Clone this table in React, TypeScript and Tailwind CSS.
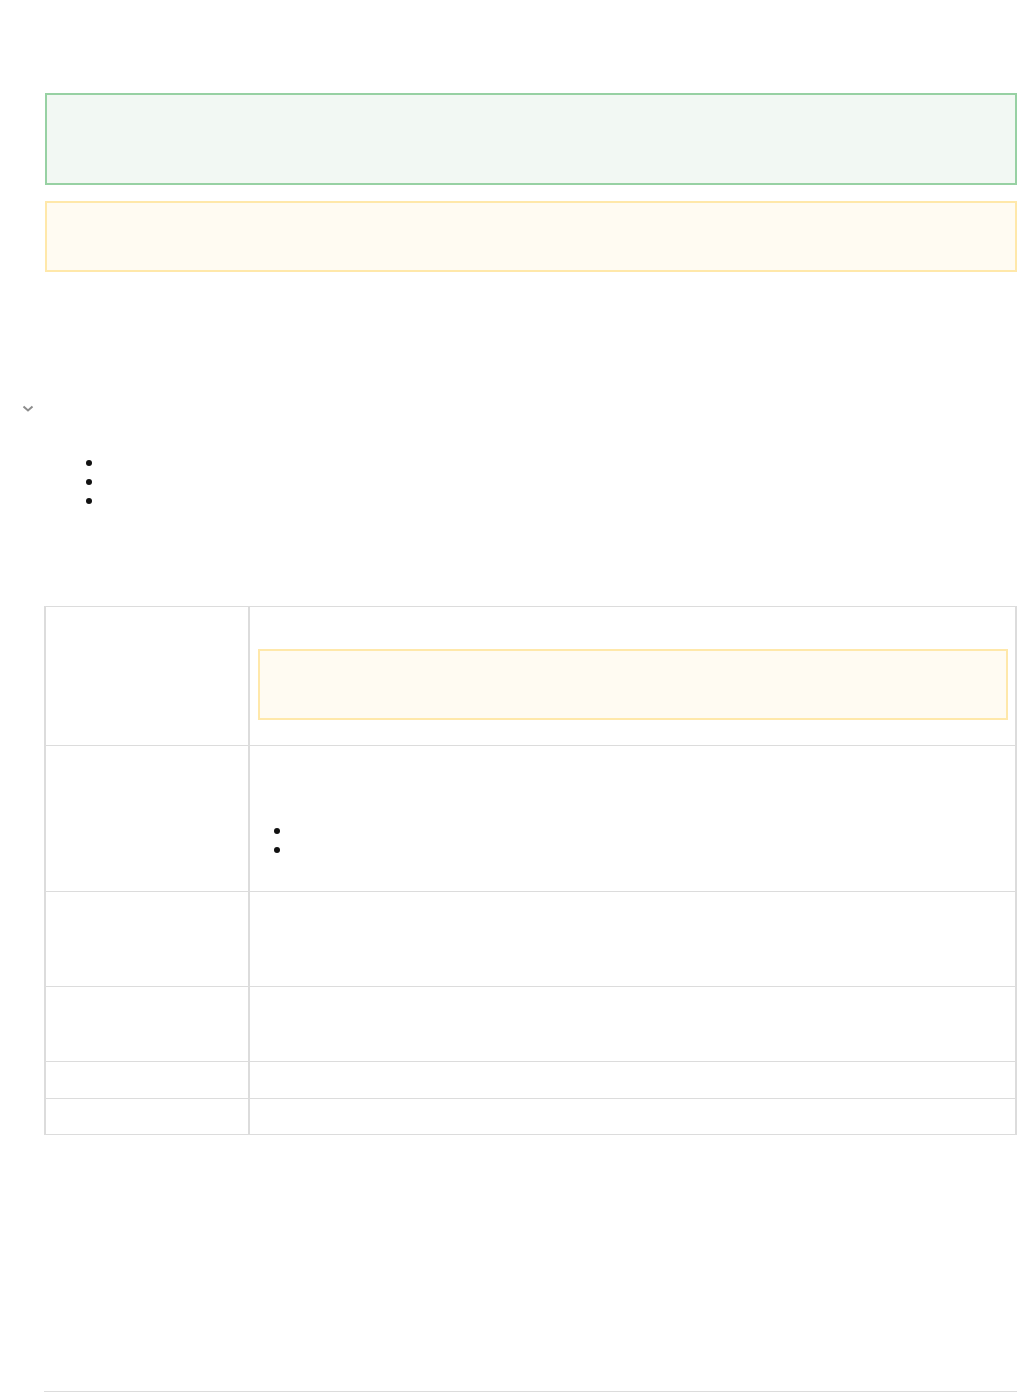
import React from "react";

function Dot() {
  return <span className="block w-[6px] h-[6px] rounded-full bg-[#111]" />;
}

function Panel({ tone, className = "" }: { tone: "green" | "yellow"; className?: string }) {
  const colors =
    tone === "green"
      ? "border-[#97d1a3] bg-[#f2f8f3]"
      : "border-[#ffe8aa] bg-[#fffbf2]";
  return <div className={`border-2 ${colors} ${className}`} />;
}

const ROWS = [
  { h: "h-[139px]", kind: "panel" },
  { h: "h-[146px]", kind: "list" },
  { h: "h-[95px]", kind: "empty" },
  { h: "h-[75px]", kind: "empty" },
  { h: "h-[37px]", kind: "empty" },
  { h: "h-[36px]", kind: "empty" },
];

export default function App() {
  return (
    <div className="min-h-screen bg-white font-['Liberation_Sans',sans-serif]">
      <div className="pt-[93px] ml-[45px] mr-[16px] flex flex-col gap-[16px]">
        <Panel tone="green" className="h-[92px]" />
        <Panel tone="yellow" className="h-[71px]" />
      </div>

      {/* collapsed section */}
      <div className="mt-[133px] pl-[22px]">
        <svg width="12" height="8" viewBox="0 0 12 8" className="block">
          <polyline points="1.5,1.5 6,5.5 10.5,1.5" fill="none" stroke="#8c8c8c" strokeWidth="2" />
        </svg>
      </div>

      <div className="mt-[47px] pl-[86px] flex flex-col gap-[13px]">
        <Dot />
        <Dot />
        <Dot />
      </div>

      {/* table */}
      <div className="mt-[102px] ml-[44px] mr-[16px] border-x-2 border-t border-[#dcdcdc]">
        {ROWS.map((row, i) => (
          <div key={i} className={`flex border-b border-[#dcdcdc] ${row.h}`}>
            <div className="w-[204px] border-r-2 border-[#dcdcdc]" />
            <div className="flex-1">
              {row.kind === "panel" && (
                <div className="pt-[42px] pl-[8px] pr-[7px]">
                  <Panel tone="yellow" className="h-[71px]" />
                </div>
              )}
              {row.kind === "list" && (
                <div className="pt-[82px] pl-[24px] flex flex-col gap-[13px]">
                  <Dot />
                  <Dot />
                </div>
              )}
            </div>
          </div>
        ))}
      </div>

      <div className="mt-[256px] ml-[44px] mr-[16px] border-b border-[#dcdcdc]" />
    </div>
  );
}
